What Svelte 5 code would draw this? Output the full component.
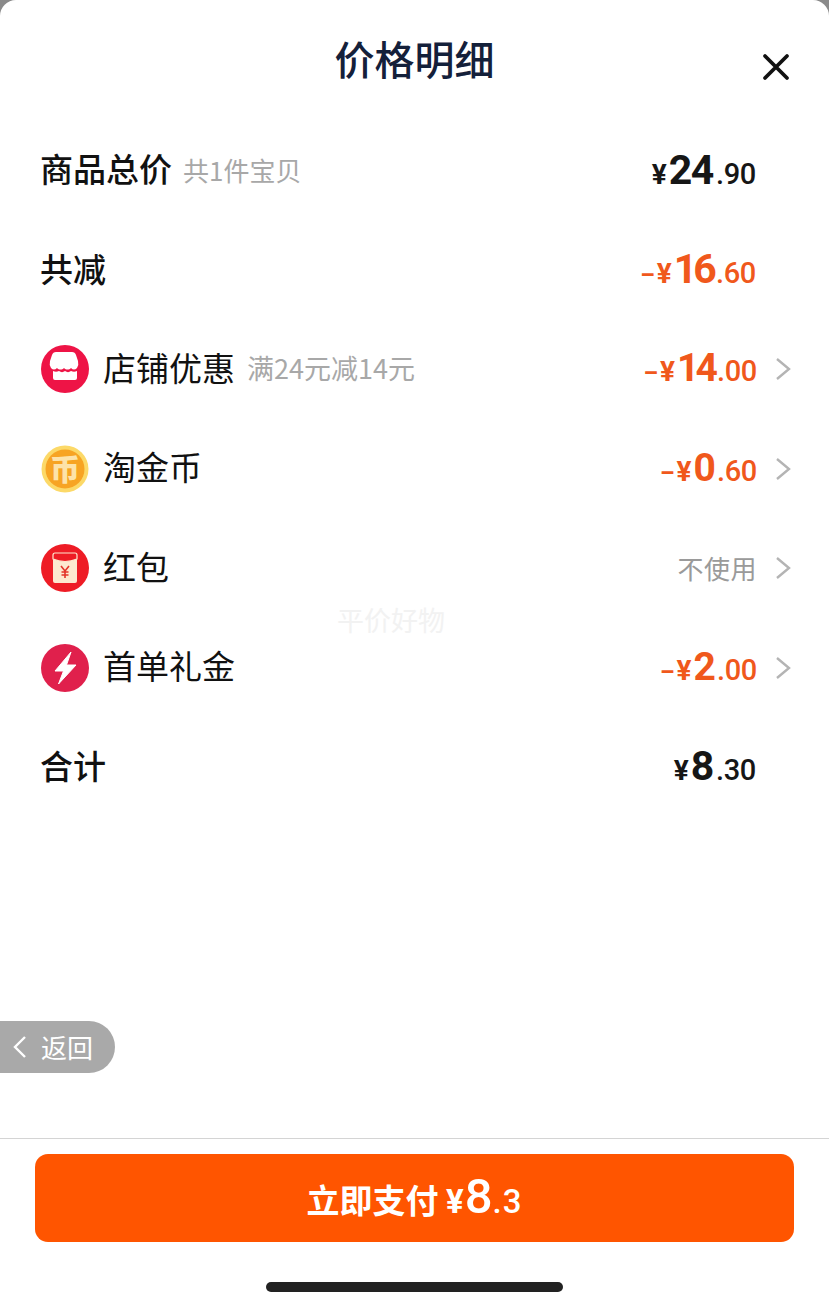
<script lang="ts">
	const rows = [
		{ icon: 'shop', label: '店铺优惠', note: '满24元减14元', big: '14', small: '00' },
		{ icon: 'coin', label: '淘金币', note: '', big: '0', small: '60' },
		{ icon: 'packet', label: '红包', note: '', text: '不使用' },
		{ icon: 'bolt', label: '首单礼金', note: '', big: '2', small: '00' },
	];
</script>

{#snippet chevron()}
	<svg class="chev" width="16" height="24" viewBox="0 0 16 24"><path d="M2 2l12 10L2 22" fill="none" stroke="#b4b4b4" stroke-width="2.4" /></svg>
{/snippet}

<div class="page">
	<header>
		<h1>价格明细</h1>
		<svg class="close" width="30" height="30" viewBox="0 0 30 30"><path d="M4 4l22 22M26 4L4 26" stroke="#111" stroke-width="3.8" stroke-linecap="round" /></svg>
	</header>

	<div class="list">
		<div class="row">
			<span class="title">商品总价</span>
			<span class="note first">共1件宝贝</span>
			<span class="price pad"><span class="yen">¥</span><span class="big">24</span><span class="small">.90</span></span>
		</div>
		<div class="row">
			<span class="title">共减</span>
			<span class="price pad red"><span class="dash">–</span><span class="yen">¥</span><span class="big tight">16</span><span class="small">.60</span></span>
		</div>

		{#each rows as r}
			<div class="row">
				<span class="icon">
					{#if r.icon === 'shop'}
						<svg viewBox="0 0 48 48" width="48" height="48">
							<circle cx="24" cy="24" r="24" fill="#ee1446" />
							<path d="M17 7h14q3 0 4 3l2 6q1 4-1 7c-2 2-4 2-6 0-2 2-5 2-7 0-2 2-5 2-7 0-2 2-4 2-6 0q-2-3-1-7l2-6q1-3 4-3z" fill="#fff" />
							<path d="M12 26c2 1 4 1 6 0 2 1.500 4 1.500 6 0 2 1.500 4 1.500 6 0 2 1 4 1 6 0v7q0 2-2 2H14q-2 0-2-2z" fill="#fff" />
						</svg>
					{:else if r.icon === 'coin'}
						<svg viewBox="0 0 48 48" width="48" height="48">
							<circle cx="24" cy="24" r="23.500" fill="#fcd968" />
							<circle cx="24" cy="24" r="19.500" fill="#f7a423" />
							<text x="24" y="35" text-anchor="middle" font-size="30" font-weight="900" fill="#fde3a9">币</text>
						</svg>
					{:else if r.icon === 'packet'}
						<svg viewBox="0 0 48 48" width="48" height="48">
							<circle cx="24" cy="24" r="24" fill="#ee1c25" />
							<rect x="12" y="9" width="24" height="30" rx="2" fill="#fde8cf" />
							<path d="M12 11q0-2 2-2h20q2 0 2 2v4q-12 5-24 0z" fill="#ee1c25" stroke="#fde8cf" stroke-width="1.200" />
							<path d="M20 22l4 5 4-5M24 27v7M20.500 28h7M20.500 31h7" fill="none" stroke="#e3342a" stroke-width="1.600" />
						</svg>
					{:else}
						<svg viewBox="0 0 48 48" width="48" height="48">
							<circle cx="24" cy="24" r="24" fill="#e0204c" />
							<path d="M30 8L14 27h8.500l-5 13L35 21h-9.500z" fill="#fff" stroke="#fff" stroke-linejoin="round" />
						</svg>
					{/if}
				</span>
				<span class="label">{r.label}</span>
				{#if r.note}<span class="note">{r.note}</span>{/if}
				{#if r.text}
					<span class="price muted">{r.text}</span>
				{:else}
					<span class="price red"><span class="dash">–</span><span class="yen">¥</span><span class="big mid" class:tight={r.big.length > 1}>{r.big}</span><span class="small">.{r.small}</span></span>
				{/if}
				{@render chevron()}
			</div>
		{/each}

		<div class="row">
			<span class="title">合计</span>
			<span class="price pad"><span class="yen">¥</span><span class="big">8</span><span class="small">.30</span></span>
		</div>
	</div>

	<div class="back">
		<svg width="14" height="24" viewBox="0 0 14 24"><path d="M12 2L2 12l10 10" fill="none" stroke="#fff" stroke-width="2.4" /></svg>
		<span>返回</span>
	</div>

	<span class="mark">平价好物</span>

	<footer>
		<button>立即支付 <span class="pay-yen">¥</span><span class="pay-big">8</span><span class="pay-small">.3</span></button>
		<div class="home"></div>
	</footer>
</div>

<style>
	:global(body) {
		margin: 0;
		background: #8a8a8a;
	}

	.page {
		position: relative;
		width: 829px;
		height: 1307px;
		background: #fff;
		border-radius: 16px 16px 0 0;
		font-family: "Noto Sans CJK SC", "Noto Sans", sans-serif;
		color: #111;
		overflow: hidden;
		display: flex;
		flex-direction: column;
	}

	header {
		height: 121px;
		display: flex;
		justify-content: center;
		position: relative;
	}

	h1 {
		margin: 35px 0 0;
		font-size: 40px;
		line-height: 46px;
		font-weight: 500;
		color: #14203a;
	}

	.close {
		position: absolute;
		right: 38px;
		top: 52px;
	}

	.list {
		padding: 0 38px 0 41px;
		flex: 1;
	}

	.row {
		height: 99.4px;
		display: flex;
		align-items: center;
	}

	.title {
		font-size: 33px;
		font-weight: 500;
		margin-bottom: 5px;
		margin-left: -1px;
	}

	.label {
		font-size: 33px;
		margin-left: 14px;
		margin-bottom: 5px;
	}

	.note {
		font-size: 27px;
		color: #a8a8a8;
		margin-left: 12px;
		margin-bottom: 3px;
	}

	.note.first {
		font-size: 26px;
		margin-left: 11px;
	}

	.icon {
		width: 48px;
		height: 48px;
		display: block;
	}

	.icon svg {
		display: block;
	}

	.price {
		margin-left: auto;
		margin-bottom: 2px;
		font-family: Roboto, sans-serif;
		font-weight: 700;
		white-space: nowrap;
		color: #161616;
		display: flex;
		align-items: baseline;
	}

	.price.pad {
		margin-right: 35px;
	}

	.price.red {
		color: #f0581c;
	}

	.price.muted {
		font-family: "Noto Sans CJK SC", sans-serif;
		font-weight: 400;
		font-size: 26px;
		letter-spacing: 0.5px;
		color: #9a9a9a;
	}

	.dash {
		font-size: 23px;
		margin-right: 2px;
	}

	.yen {
		font-size: 28px;
		margin-right: 2px;
	}

	.big {
		font-size: 41px;
		letter-spacing: -1.5px;
	}

	.big.mid {
		font-size: 39px;
		letter-spacing: -2px;
	}

	.big.tight {
		letter-spacing: -4px;
	}

	.small {
		font-size: 29px;
		font-weight: 500;
		margin-left: 3px;
		letter-spacing: -0.3px;
	}

	.chev {
		margin-left: 18px;
	}

	.back {
		position: absolute;
		left: 0;
		top: 1021px;
		width: 115px;
		height: 52px;
		background: #a9a9a9;
		border-radius: 0 26px 26px 0;
		display: flex;
		align-items: center;
		padding-left: 13px;
		box-sizing: border-box;
		color: #fff;
		font-size: 26px;
		gap: 14px;
	}

	.back span {
		margin-bottom: 2px;
	}

	.mark {
		position: absolute;
		left: 337px;
		top: 600px;
		font-size: 27px;
		color: #f2f2f2;
	}

	footer {
		height: 169px;
		border-top: 1px solid #d4d4d4;
		box-sizing: border-box;
		padding: 15px 35px 0;
	}

	button {
		width: 100%;
		height: 88px;
		background: #ff5500;
		border: none;
		border-radius: 13px;
		color: #fff;
		font-family: inherit;
		font-size: 33px;
		font-weight: 700;
		display: flex;
		align-items: baseline;
		justify-content: center;
		line-height: 85px;
		padding: 0;
		white-space: pre;
	}

	.pay-yen {
		font-family: Roboto, sans-serif;
		font-size: 33px;
	}

	.pay-big {
		font-family: Roboto, sans-serif;
		font-size: 49px;
		font-weight: 500;
		margin-left: 1px;
	}

	.pay-small {
		font-family: Roboto, sans-serif;
		font-size: 33px;
		font-weight: 500;
		letter-spacing: 1px;
	}

	.home {
		width: 297px;
		height: 10px;
		border-radius: 5px;
		background: #222;
		margin: 40px auto 0;
	}
</style>
